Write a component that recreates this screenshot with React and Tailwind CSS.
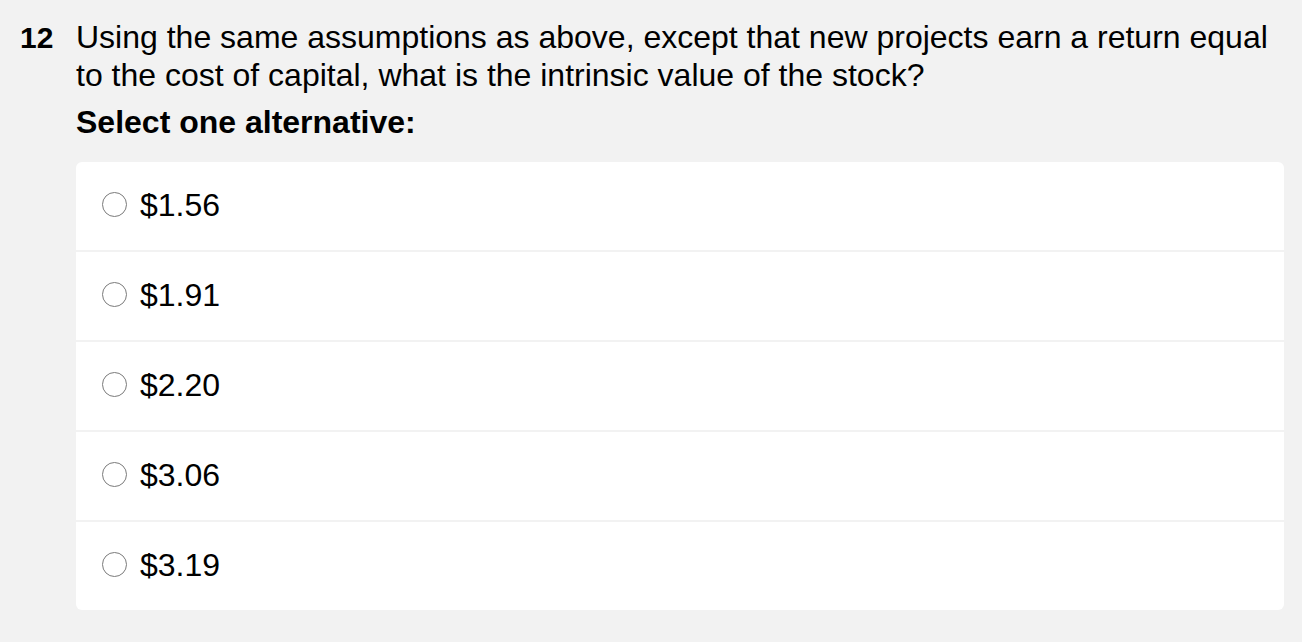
import React from 'react';

const options = ['$1.56', '$1.91', '$2.20', '$3.06', '$3.19'];

export default function App() {
  return (
    <div className="min-h-screen bg-[#f2f2f2] pl-5 pr-[18px] pt-[18px] text-black [font-family:'Liberation_Sans',Arial,sans-serif]">
      <div className="flex items-baseline">
        <div className="w-[56px] shrink-0 text-[30px] font-bold leading-[38px]">12</div>
        <div className="min-w-0 flex-1">
          <p className="text-[32px] leading-[38px]">
            Using the same assumptions as above, except that new projects earn a return equal to the cost of capital, what is the intrinsic value of the stock?
          </p>
          <p className="mt-[9px] text-[32px] font-bold leading-[38px]">Select one alternative:</p>
          <div className="mt-[21px] flex flex-col gap-[2px] overflow-hidden rounded-[6px]">
            {options.map((opt) => (
              <label key={opt} className="flex h-[88px] items-center bg-white pb-[3px] pl-[26px]">
                <span className="h-[25px] w-[25px] shrink-0 rounded-full border-[1.5px] border-[#7a7a7a] bg-white" />
                <span className="ml-[13px] text-[32px] leading-none">{opt}</span>
              </label>
            ))}
          </div>
        </div>
      </div>
    </div>
  );
}
